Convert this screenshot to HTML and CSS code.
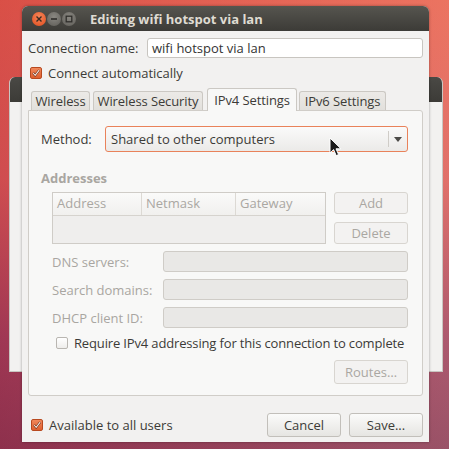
FILE: index.html
```html
<!DOCTYPE html>
<html lang="en">
<head>
    <meta charset="UTF-8">
    <title>Editing wifi hotspot via lan</title>
    <link rel="stylesheet" href="styles.css">
</head>
<body>
    <!-- window behind the dialog -->
    <div class="back-window">
        <div class="back-title"></div>
    </div>

    <div class="dialog">
        <div class="titlebar">
            <div class="wm-buttons">
                <span class="wm-btn close">
                    <svg width="8" height="8" viewBox="0 0 8 8"><path d="M1.5 1.5 L6.5 6.5 M6.5 1.5 L1.5 6.5" stroke="#3a2a22" stroke-width="1.4"/></svg>
                </span>
                <span class="wm-btn">
                    <svg width="8" height="8" viewBox="0 0 8 8"><path d="M1 4 H7" stroke="#2f2e2b" stroke-width="1.6"/></svg>
                </span>
                <span class="wm-btn">
                    <svg width="8" height="8" viewBox="0 0 8 8"><rect x="1.2" y="1.2" width="5.6" height="5.6" fill="none" stroke="#2f2e2b" stroke-width="1.3"/></svg>
                </span>
            </div>
            <div class="title">Editing wifi hotspot via lan</div>
        </div>

        <div class="dialog-body">
            <div class="name-row">
                <label>Connection name:</label>
                <div class="entry">wifi hotspot via lan</div>
            </div>

            <div class="check-row">
                <span class="check on">
                    <svg width="12" height="12" viewBox="0 0 12 12"><path d="M2.5 6 L5 8.8 L9.8 2.6" fill="none" stroke="#5b2412" stroke-width="2.6"/><path d="M2.5 6 L5 8.8 L9.8 2.6" fill="none" stroke="#fbe9df" stroke-width="1.3"/></svg>
                </span>
                <span>Connect automatically</span>
            </div>

            <div class="tabs">
                <div class="tab t1">Wireless</div>
                <div class="tab t2">Wireless Security</div>
                <div class="tab t3 active">IPv4 Settings</div>
                <div class="tab t4">IPv6 Settings</div>
            </div>

            <div class="panel">
                <div class="method-row">
                    <label>Method:</label>
                    <div class="combo">
                        <span class="combo-text">Shared to other computers</span>
                        <span class="combo-arrow">
                            <svg width="8" height="5" viewBox="0 0 8 5"><path d="M0 0 H8 L4 5 Z" fill="#4c4b48"/></svg>
                        </span>
                        <svg class="pointer" width="14" height="21" viewBox="0 0 14 21"><path d="M1 1 L1 16 L4.6 12.6 L7.2 18.6 L9.6 17.6 L7 11.8 L12 11.8 Z" fill="#1a1a1a" stroke="#ffffff" stroke-width="1"/></svg>
                    </div>
                </div>

                <div class="section-title">Addresses</div>

                <div class="addr-row">
                    <div class="addr-table">
                        <div class="addr-head">
                            <div class="col c1">Address</div>
                            <div class="col c2">Netmask</div>
                            <div class="col c3">Gateway</div>
                        </div>
                        <div class="addr-body"></div>
                    </div>
                    <div class="addr-buttons">
                        <div class="button dim">Add</div>
                        <div class="button dim">Delete</div>
                    </div>
                </div>

                <div class="fields">
                    <label>DNS servers:</label>
                    <div class="entry off"></div>
                    <label>Search domains:</label>
                    <div class="entry off"></div>
                    <label>DHCP client ID:</label>
                    <div class="entry off"></div>
                </div>

                <div class="check-row require">
                    <span class="check"></span>
                    <span>Require IPv4 addressing for this connection to complete</span>
                </div>

                <div class="routes-row">
                    <div class="button dim">Routes…</div>
                </div>
            </div>

            <div class="bottom-row">
                <div class="check-row">
                    <span class="check on">
                        <svg width="12" height="12" viewBox="0 0 12 12"><path d="M2.5 6 L5 8.8 L9.8 2.6" fill="none" stroke="#5b2412" stroke-width="2.6"/><path d="M2.5 6 L5 8.8 L9.8 2.6" fill="none" stroke="#fbe9df" stroke-width="1.3"/></svg>
                    </span>
                    <span>Available to all users</span>
                </div>
                <div class="actions">
                    <div class="button">Cancel</div>
                    <div class="button">Save...</div>
                </div>
            </div>
        </div>
    </div>
</body>
</html>
```

FILE: styles.css
```css
body {
    margin: 0;
    width: 449px;
    height: 449px;
    overflow: hidden;
    position: relative;
    font-family: "Open Sans", "Noto Sans", sans-serif;
    font-size: 13px;
    color: #3c3b37;
    background:
        linear-gradient(90deg, rgba(200, 60, 60, 0.35), rgba(255, 175, 145, 0.3)),
        linear-gradient(180deg, #e35a4c 0%, #d3565a 40%, #8a3560 75%, #6e2a55 100%);
}
.back-window {
    position: absolute;
    left: 9px;
    top: 77px;
    width: 434px;
    height: 295px;
    background: #f2f1f0;
    border: 1px solid #c9c6c1;
    border-top: none;
    border-radius: 6px 6px 0 0;
    box-sizing: border-box;
    overflow: hidden;
}
.back-title {
    height: 25px;
    background: linear-gradient(#4a4945, #3c3b37);
}
.dialog {
    position: absolute;
    left: 22px;
    top: 6px;
    width: 407px;
    height: 436px;
    background: #f2f1f0;
    border-radius: 6px 6px 0 0;
    box-shadow: 0 0 3px rgba(0, 0, 0, 0.35);
    display: flex;
    flex-direction: column;
}
.titlebar {
    height: 25px;
    flex: none;
    border-radius: 6px 6px 0 0;
    background: linear-gradient(#56554f, #3c3b37);
    display: flex;
    align-items: center;
    padding-left: 10px;
}
.wm-buttons {
    display: flex;
    gap: 1px;
}
.wm-btn {
    width: 14px;
    height: 14px;
    border-radius: 50%;
    background: radial-gradient(circle at 50% 35%, #8a8882, #5e5c57);
    display: flex;
    align-items: center;
    justify-content: center;
}
.wm-btn.close {
    background: radial-gradient(circle at 50% 35%, #f6875a, #df4b1c);
}
.title {
    margin-left: 14px;
    font-weight: bold;
    color: #dfdbd2;
    font-size: 13px;
}
.dialog-body {
    flex: 1;
    padding: 7px 6px 0 6px;
    display: flex;
    flex-direction: column;
}
.name-row {
    display: flex;
    align-items: center;
}
.name-row label {
    width: 119px;
}
.entry {
    flex: 1;
    height: 20px;
    box-sizing: border-box;
    background: #ffffff;
    border: 1px solid #c8c5c0;
    border-radius: 3px;
    padding: 0 4px;
    line-height: 18px;
    color: #333;
}
.entry.off {
    background: #e9e8e6;
    border-color: #cfccc7;
}
.check-row {
    display: flex;
    align-items: center;
    gap: 6px;
    white-space: nowrap;
}
.dialog-body > .check-row {
    margin-top: 6px;
    padding-left: 2px;
}
.check {
    width: 12px;
    height: 12px;
    flex: none;
    box-sizing: border-box;
    border: 1px solid #b9b6b1;
    border-radius: 2px;
    background: linear-gradient(#ffffff, #eeedeb);
    display: flex;
    align-items: center;
    justify-content: center;
}
.check.on {
    border-color: #b8491f;
    background: linear-gradient(#f0875a, #de5f2f);
}
.tabs {
    display: flex;
    align-items: flex-end;
    margin-top: 7px;
    padding-left: 3px;
    height: 21px;
}
.tab {
    height: 19px;
    box-sizing: border-box;
    text-align: center;
    white-space: nowrap;
    letter-spacing: -0.1px;
    line-height: 18px;
    background: linear-gradient(#eceae7, #e2e0dc);
    border: 1px solid #cbc8c3;
    border-bottom: none;
    border-radius: 3px 3px 0 0;
}
.t1 { width: 59px; }
.t2 { width: 110px; margin-left: 3px; }
.t3 { width: 90px; margin-left: 4px; }
.t4 { width: 87px; margin-left: 2px; }
.tab.active {
    height: 23px;
    line-height: 22px;
    background: #f8f8f7;
    margin-bottom: -1px;
    position: relative;
}
.panel {
    height: 286px;
    flex: none;
    box-sizing: border-box;
    background: #f8f8f7;
    border: 1px solid #d0cdc8;
    border-radius: 0 3px 3px 3px;
    padding: 15px 14px 0 12px;
}
.method-row {
    display: flex;
    align-items: center;
}
.method-row label {
    width: 64px;
}
.combo {
    flex: 1;
    height: 26px;
    box-sizing: border-box;
    border: 1px solid #e9825a;
    border-radius: 3px;
    background: linear-gradient(#fafafa, #ebeae8);
    display: flex;
    align-items: center;
    position: relative;
}
.combo-text {
    flex: 1;
    padding-left: 5px;
}
.combo-arrow {
    width: 18px;
    height: 16px;
    border-left: 1px solid #cfccc7;
    display: flex;
    align-items: center;
    justify-content: center;
}
.pointer {
    position: absolute;
    left: 223px;
    top: 10px;
}
.section-title {
    margin-top: 17px;
    font-weight: bold;
    color: #a9a6a1;
}
.addr-row {
    display: flex;
    margin-top: 5px;
    padding-left: 11px;
    gap: 8px;
}
.addr-table {
    width: 275px;
    height: 52px;
    box-sizing: border-box;
    border: 1px solid #cfccc7;
    background: #efeeed;
}
.addr-head {
    display: flex;
    height: 22px;
    background: linear-gradient(#fafaf9, #f1f0ee);
    border-bottom: 1px solid #d6d3ce;
}
.col {
    box-sizing: border-box;
    padding-left: 4px;
    line-height: 21px;
    color: #aaa7a2;
    border-right: 1px solid #dcd9d4;
}
.c1 { width: 89px; }
.c2 { width: 94px; }
.c3 { flex: 1; border-right: none; }
.addr-buttons {
    display: flex;
    flex-direction: column;
    gap: 8px;
}
.button {
    width: 74px;
    height: 22px;
    box-sizing: border-box;
    border: 1px solid #c2bfba;
    border-radius: 3px;
    background: linear-gradient(#fbfbfa, #e6e5e2);
    text-align: center;
    line-height: 20px;
}
.button.dim {
    color: #aaa7a2;
    border-color: #d8d5d0;
    background: #f3f2f1;
}
.fields {
    display: grid;
    grid-template-columns: 111px 1fr;
    row-gap: 7px;
    align-items: center;
    margin-top: 7px;
    padding-left: 11px;
    color: #a9a6a1;
}
.fields .entry {
    height: 21px;
}
.require {
    margin-top: 6px;
    padding-left: 15px;
    color: #3c3b37;
    letter-spacing: -0.15px;
}
.routes-row {
    display: flex;
    justify-content: flex-end;
    margin-top: 8px;
}
.routes-row .button {
    height: 24px;
    line-height: 22px;
}
.bottom-row {
    display: flex;
    justify-content: space-between;
    align-items: center;
    margin-top: 17px;
    padding-left: 3px;
}
.actions {
    display: flex;
    gap: 8px;
}
.actions .button {
    width: 74px;
    height: 24px;
    line-height: 22px;
}
```
